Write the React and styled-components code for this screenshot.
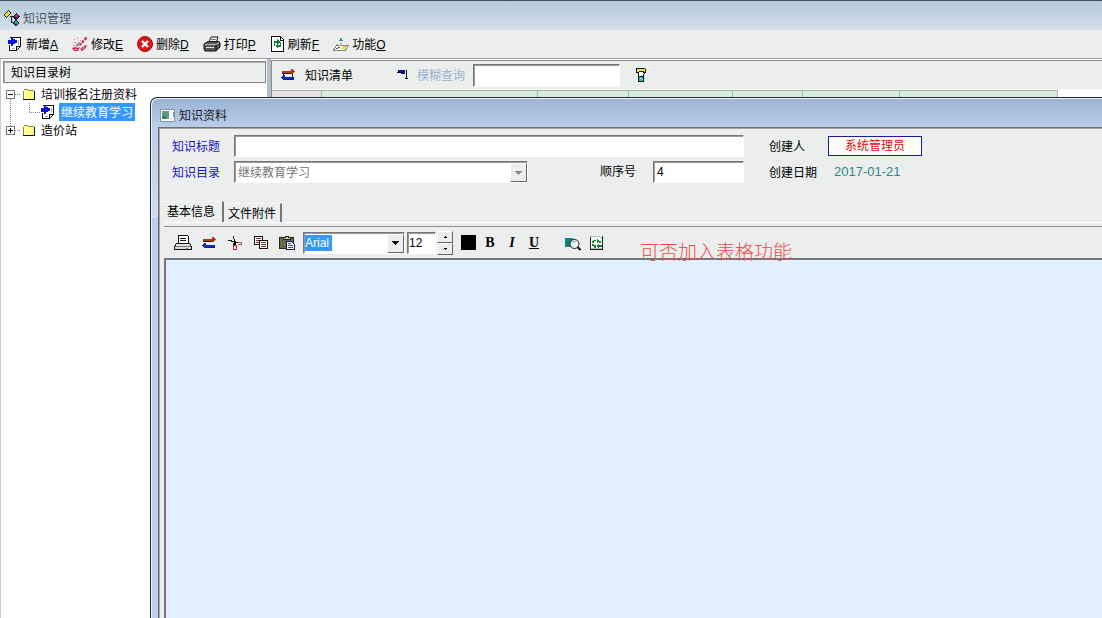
import React, { useState } from 'react'
import styled, { createGlobalStyle, css } from 'styled-components'

const menuItems = [
  { text: '新增', hotkey: 'A', icon: <AddIcon /> },
  { text: '修改', hotkey: 'E', icon: <EditIcon /> },
  { text: '删除', hotkey: 'D', icon: <DeleteIcon /> },
  { text: '打印', hotkey: 'P', icon: <PrinterIcon /> },
  { text: '刷新', hotkey: 'F', icon: <RefreshIcon /> },
  { text: '功能', hotkey: 'O', icon: <FunctionIcon /> },
]

const gridColumns = [49, 216, 91, 104, 70, 97, 158]

export default function App() {
  return (
    <Desktop>
      <GlobalStyle />
      <TitleBar>
        <TreeLogo />
        <h1>知识管理</h1>
      </TitleBar>
      <MenuBar>
        {menuItems.map((item) => (
          <MenuButton key={item.hotkey} type="button">
            {item.icon}
            <span>{item.text}<u>{item.hotkey}</u></span>
          </MenuButton>
        ))}
      </MenuBar>
      <Body>
        <DirectoryTree />
        <ListPanel />
      </Body>
      <KnowledgeDialog />
      <Remark>可否加入表格功能</Remark>
    </Desktop>
  )
}

function DirectoryTree() {
  return (
    <Sidebar>
      <SidebarHeader>知识目录树</SidebarHeader>
      <Tree>
        <TreeRow>
          <Expander type="button" aria-label="收起"><Guide open /></Expander>
          <FolderIcon />
          <TreeLabel type="button">培训报名注册资料</TreeLabel>
        </TreeRow>
        <TreeRow>
          <ChildGuide />
          <AddIcon />
          <TreeLabel type="button" $selected>继续教育学习</TreeLabel>
        </TreeRow>
        <TreeRow>
          <Expander type="button" aria-label="展开"><Guide /></Expander>
          <FolderIcon />
          <TreeLabel type="button">造价站</TreeLabel>
        </TreeRow>
      </Tree>
    </Sidebar>
  )
}

function ListPanel() {
  return (
    <Panel>
      <ListBar>
        <SwapIcon linked />
        <ListTitle>知识清单</ListTitle>
        <FilterIcon />
        <SearchLabel htmlFor="search">模糊查询</SearchLabel>
        <SearchInput id="search" />
        <PlainButton type="button" aria-label="查询"><TorchIcon /></PlainButton>
      </ListBar>
      <Grid>
        <thead>
          <tr>
            {gridColumns.map((w, i) => (
              <GridHead key={i} $w={w} $first={i === 0} />
            ))}
          </tr>
        </thead>
      </Grid>
    </Panel>
  )
}

function KnowledgeDialog() {
  const [tab, setTab] = useState(0)
  const [size, setSize] = useState(12)

  return (
    <Dialog role="dialog" aria-labelledby="dialog-title">
      <DialogTitle>
        <FormIcon />
        <h2 id="dialog-title">知识资料</h2>
      </DialogTitle>
      <Client>
        <Form>
          <Label htmlFor="title" $blue>知识标题</Label>
          <TitleInput id="title" />
          <Label htmlFor="creator">创建人</Label>
          <Creator id="creator">系统管理员</Creator>

          <Label htmlFor="directory" $blue>知识目录</Label>
          <Combo>
            <select id="directory" disabled>
              <option>继续教育学习</option>
            </select>
            <Arrow><Triangle color="#8c8c8c" /></Arrow>
          </Combo>
          <OrderLabel htmlFor="order">顺序号</OrderLabel>
          <OrderInput id="order" defaultValue="4" />
          <Label htmlFor="created">创建日期</Label>
          <Created id="created">2017-01-21</Created>
        </Form>

        <Tabs role="tablist">
          {['基本信息', '文件附件'].map((name, i) => (
            <Tab key={name} type="button" role="tab" aria-selected={tab === i} $active={tab === i} onClick={() => setTab(i)}>
              {name}
            </Tab>
          ))}
        </Tabs>

        <Page>
          <EditBar>
            <ToolButton type="button" aria-label="打印"><PrintOutlineIcon /></ToolButton>
            <ToolButton type="button" aria-label="切换"><SwapIcon /></ToolButton>
            <ToolButton type="button" aria-label="剪切"><CutIcon /></ToolButton>
            <ToolButton type="button" aria-label="复制"><CopyIcon /></ToolButton>
            <ToolButton type="button" aria-label="粘贴"><PasteIcon /></ToolButton>
            <FontCombo>
              <select aria-label="字体">
                <option>Arial</option>
              </select>
              <Arrow><Triangle color="#000" /></Arrow>
            </FontCombo>
            <SizeInput aria-label="字号" value={size} onChange={(e) => setSize(e.target.value)} />
            <Spinner>
              <button type="button" aria-label="增大" onClick={() => setSize(Number(size) + 1)}>
                <svg width="3" height="2"><path d="M1 0h1v1h1v1H0V1h1z" /></svg>
              </button>
              <button type="button" aria-label="减小" onClick={() => setSize(Number(size) - 1)}>
                <svg width="3" height="2"><path d="M0 0h3v1H2v1H1V1H0z" /></svg>
              </button>
            </Spinner>
            <ColorButton type="button" aria-label="颜色" />
            <StyleButton type="button"><b>B</b></StyleButton>
            <StyleButton type="button"><i>I</i></StyleButton>
            <StyleButton type="button"><u>U</u></StyleButton>
            <Gap />
            <ToolButton type="button" aria-label="查找" $narrow><FindIcon /></ToolButton>
            <ToolButton type="button" aria-label="替换" $narrow><ReplaceIcon /></ToolButton>
          </EditBar>
          <Editor aria-label="内容" />
        </Page>
      </Client>
    </Dialog>
  )
}

/* ---------- icons ---------- */

function TreeLogo() {
  return (
    <svg width="17" height="17" viewBox="0 0 17 17" shapeRendering="crispEdges">
      <path d="M7 6.500h3M8.500 6v7M9 12.500h2" stroke="#222" fill="none" />
      <path d="M0 5l5-5 3 3-5 5z" fill="#222" />
      <path d="M1 5l4-4 2 2-4 4z" fill="#f2e418" />
      <path d="M9 7l4-4 4 3-4 4z" fill="#222" />
      <path d="M11 6l2-2 2 2-2 2z" fill="#b0289a" />
      <path d="M9 13l4-4 3 4-3 4z" fill="#222" />
      <path d="M11 12l2-2 2 3-2 2z" fill="#16a39c" />
    </svg>
  )
}

function AddIcon() {
  return (
    <svg width="16" height="16" viewBox="0 0 16 16" shapeRendering="crispEdges">
      <path d="M3 1h11v10h-1v1h-1v1h-1v1h-1v1H2V9h1z" fill="#111" />
      <path d="M3 2h10v8H9v4H3z" fill="#fff" />
      <path d="M10 11h2v1h-1v1h-1z" fill="#fff" />
      <path d="M11.500 4v5M5 12.500h3" stroke="#a5abb5" />
      <path d="M4 1h2v2h2v1h2v3H8v1H6v2H4V8H1V4h3z" fill="#0814d8" />
    </svg>
  )
}

function EditIcon() {
  return (
    <svg width="16" height="16" viewBox="0 0 16 16">
      <path d="M1 2h9l2 9H2z" fill="#f7e9ee" />
      <path d="M2 3.500h1M5 2.500h1M8 4.500h1M2 6.500h2M1 9.500h2" stroke="#c98695" />
      <path d="M4 8l3-2 2 1-2 3-3 1z" fill="#9c96a8" />
      <path d="M14.500 1.500L8 9" stroke="#c51c48" strokeWidth="2" strokeDasharray="3 1" />
      <path d="M0 12l3-1 3 1 2-1-2 4H2zM8 13l4-3 3-1-1 3-4 3z" fill="#d32452" />
      <path d="M2 13.500h3M10 13l3-2" stroke="#f0a8bc" />
    </svg>
  )
}

function DeleteIcon() {
  return (
    <svg width="16" height="16" viewBox="0 0 16 16">
      <circle cx="8" cy="8" r="7.500" fill="#e01616" stroke="#a30c0c" />
      <path d="M5 5l6 6M11 5l-6 6" stroke="#fff" strokeWidth="2.400" />
    </svg>
  )
}

function PrinterIcon() {
  return (
    <svg width="18" height="16" viewBox="0 0 18 16">
      <path d="M6 6l2-5h7l-2 6z" fill="#fff" stroke="#111" />
      <path d="M8 3.500h5M7.500 5.500h5" stroke="#777" />
      <path d="M1 8l4-2.500h11L17 7v4l-4 4H2l-1-2z" fill="#555" stroke="#111" />
      <path d="M2 8.500h11l3-2" stroke="#bbb" fill="none" />
      <path d="M3 11.500h8" stroke="#ddd" />
      <path d="M13 9v5" stroke="#111" />
    </svg>
  )
}

function RefreshIcon() {
  return (
    <svg width="15" height="16" viewBox="0 0 15 16" shapeRendering="crispEdges">
      <path d="M1.500.500h9l3 3v12h-12z" fill="#fff" stroke="#111" />
      <path d="M10.500 1v3h3" fill="none" stroke="#111" />
      <path d="M4 5h3V3l3 3-3 3V7H5v3H4zM11 11H8v2l-3-3 3-3v2h2V6h1z" fill="#18843a" />
    </svg>
  )
}

function FunctionIcon() {
  return (
    <svg width="16" height="16" viewBox="0 0 16 16" shapeRendering="crispEdges">
      <path d="M8 1l2 4H6z" fill="#2795a8" />
      <path d="M3.500 9.500h12l-3 5H.500z" fill="#f6f6f2" stroke="#888" />
      <path d="M7 7h2v1H7zM3 8h2v1H3z" fill="#999" />
      <path d="M7 13l3-3h4l-2 3z" fill="#e9dc23" />
      <path d="M3 12.500h2M5 11.500h2" stroke="#555" />
    </svg>
  )
}

function FolderIcon() {
  return (
    <svg width="14" height="14" viewBox="0 0 14 14" shapeRendering="crispEdges">
      <path d="M1 12V3h1V2h4v1h1v1h5v1h1v7z" fill="#ffff80" />
      <path d="M1.500 3.500v8M2 2.500h4M6 3.500h6" stroke="#8a8a4a" />
      <path d="M1 12.500h12M12.500 4v8" stroke="#111" />
      <path d="M2.500 11V5" stroke="#fff" />
    </svg>
  )
}

function Guide({ open }) {
  return (
    <svg width="22" height="18" viewBox="0 0 22 18" shapeRendering="crispEdges">
      <path d={open ? 'M10.500 14v4M15 9.500h6' : 'M10.500 0v5M15 9.500h6'} stroke="#888" strokeDasharray="1 1" />
      <rect x="6.500" y="5.500" width="8" height="8" fill="#fff" stroke="#777" />
      <path d={open ? 'M8 9.500h5' : 'M8 9.500h5M10.500 7v5'} stroke="#000" />
    </svg>
  )
}

function ChildGuide() {
  return (
    <svg width="40" height="18" viewBox="0 0 40 18" shapeRendering="crispEdges">
      <path d="M10.500 0v18M29.500 0v9M29 9.500h11" stroke="#888" strokeDasharray="1 1" />
    </svg>
  )
}

function SwapIcon({ linked }) {
  return (
    <svg width="16" height="12" viewBox="0 0 16 12" shapeRendering="crispEdges">
      <path d="M2 2h9V0h2v1h1v1h1v1h-1v1h-1v1h-2V4H2z" fill="#b8301c" />
      <path d="M14 10H5v1H3v-1H2V9H1V8h1V7h1V6h2v2h9z" fill="#0c28c4" />
      <path d="M2 4h9v1H2zM5 10h9v1H5z" fill="#222" />
      {linked && <path d="M3 4h1v3H3zM12 5h1v3h-1z" fill="#222" />}
    </svg>
  )
}

function FilterIcon() {
  return (
    <svg width="13" height="12" viewBox="0 0 13 12" shapeRendering="crispEdges">
      <path d="M2 1h7v4H5V4H2z" fill="#0b0f8c" />
      <path d="M1 3h4v1H1zM10 1h1v8h1v1H9V9h1z" fill="#111" />
    </svg>
  )
}

function TorchIcon() {
  return (
    <svg width="12" height="14" viewBox="0 0 12 14" shapeRendering="crispEdges">
      <path d="M1 0h9v1h1v4h-1v1H9v8H3V5H1z" fill="#111" />
      <path d="M2 1h8v3H9V3H4v1H2z" fill="#f6ea1c" />
      <path d="M4 4h4v1h1v1H8v2H4z" fill="#fff" />
      <path d="M4 9h4v4H4z" fill="#29bcd0" />
      <path d="M5 10h1v1H5zM7 11h1v1H7z" fill="#fff" />
    </svg>
  )
}

function FormIcon() {
  return (
    <svg width="16" height="13" viewBox="0 0 16 13" shapeRendering="crispEdges">
      <rect x=".500" y=".500" width="14" height="12" fill="#fff" stroke="#8796a5" />
      <path d="M2 2h7v8H2z" fill="#5c9a8a" />
      <path d="M2 7h4v3H2z" fill="#3f7a6e" />
      <path d="M11 9h1v1h-1zM13 3h1v5h-1z" fill="#7c929e" />
    </svg>
  )
}

function PrintOutlineIcon() {
  return (
    <svg width="18" height="16" viewBox="0 0 18 16" shapeRendering="crispEdges">
      <path d="M4.500 8.500v-8h9l1 1v7" fill="#fff" stroke="#111" />
      <path d="M6 3.500h6M6 5.500h6" stroke="#111" />
      <path d="M2.500 8.500h13l2 3v3H.500v-3z" fill="#dcdcdc" stroke="#111" />
      <path d="M1 11.500h16" stroke="#777" />
      <path d="M12 13h2v1h-2z" fill="#888" />
    </svg>
  )
}

function CutIcon() {
  return (
    <svg width="16" height="16" viewBox="0 0 16 16" shapeRendering="crispEdges">
      <path d="M6 1h1v3h1v2h1v1h2v1H7V7H4V6H1V5h4v1h2V4H6z" fill="#111" />
      <path d="M6 8h3v2H6z" fill="#111" />
      <path d="M10.500 7.500h4v2h-4" stroke="#9a5b5b" fill="none" />
      <path d="M6.500 10.500h3v4h-3z" fill="#fff" stroke="#d2182c" />
    </svg>
  )
}

function CopyIcon() {
  return (
    <svg width="16" height="16" viewBox="0 0 16 16" shapeRendering="crispEdges">
      <path d="M1.500 1.500h8v8h-8z" fill="#fff" stroke="#111" />
      <path d="M3 3.500h5M3 5.500h3M3 7.500h3" stroke="#7d2d2d" />
      <path d="M6.500 5.500h8v8h-8z" fill="#fff" stroke="#111" />
      <path d="M8 7.500h5M8 9.500h5M8 11.500h5" stroke="#7d2d2d" />
    </svg>
  )
}

function PasteIcon() {
  return (
    <svg width="16" height="16" viewBox="0 0 16 16" shapeRendering="crispEdges">
      <path d="M.500 2.500h14v11H.500z" fill="#6b6b42" stroke="#222" />
      <path d="M4 4V2h2V1h3v1h2v2z" fill="#d9d56c" stroke="#222" />
      <path d="M7.500 6.500h5l3 3v5h-8z" fill="#fff" stroke="#10106a" />
      <path d="M9 8.500h3M9 10.500h5M9 12.500h5" stroke="#3a4aa0" />
    </svg>
  )
}

function FindIcon() {
  return (
    <svg width="16" height="16" viewBox="0 0 16 16">
      <path d="M0 3h7l4 2v7H0z" fill="#12827f" />
      <circle cx="9.500" cy="9" r="4.500" fill="#edf3f3" stroke="#222" />
      <path d="M12.500 12l3 3" stroke="#111" strokeWidth="2" />
      <path d="M7 8q2-3 4-1" fill="none" stroke="#8aa" />
    </svg>
  )
}

function ReplaceIcon() {
  return (
    <svg width="14" height="16" viewBox="0 0 14 16" shapeRendering="crispEdges">
      <path d="M.500 1.500h9l3 3v9H.500z" fill="#fbfdfb" stroke="#b4bab4" />
      <path d="M.500 2v12.500h12V1" fill="none" stroke="#222" />
      <path d="M3 5h3v1H4v2H2V6h1zM7 4l3 2h1v2H9V7L7 8zM2 9h2v1h2v3H4v-2H2zM8 9h1v1h3v2H9v1H8l-1-2z" fill="#168229" />
    </svg>
  )
}

function Triangle({ color }) {
  return (
    <svg width="7" height="4" viewBox="0 0 7 4" shapeRendering="crispEdges">
      <path d="M0 0h7v1H6v1H5v1H4v1H3V3H2V2H1V1H0z" fill={color} />
    </svg>
  )
}

/* ---------- styles ---------- */

const GlobalStyle = createGlobalStyle`
  * { box-sizing: border-box; }
  body {
    margin: 0;
    overflow: hidden;
    font: 12px/16px 'Liberation Sans', 'Noto Sans CJK SC', sans-serif;
    color: #000;
  }
  h1, h2 { margin: 0; font-size: 12px; font-weight: normal; }
  button, input, select, textarea {
    margin: 0;
    padding: 0;
    border: 0;
    border-radius: 0;
    outline: 0;
    font: inherit;
    color: inherit;
    background: none;
  }
  svg { display: block; flex: none; }
`

const sunken = css`
  background: #fff;
  border: 1px solid;
  border-color: #777 #fff #fff #777;
  box-shadow: inset 1px 1px 0 #999;
`

const raised = css`
  background: #eceeed;
  border: 1px solid;
  border-color: #fff #666 #666 #fff;
`

const Desktop = styled.div`
  position: relative;
  display: flex;
  flex-direction: column;
  height: 100vh;
  overflow: hidden;
  background: #fff;
`

const TitleBar = styled.header`
  display: flex;
  align-items: center;
  gap: 3px;
  height: 30px;
  padding: 6px 3px 0;
  border-top: 1px solid #4a4f5a;
  background: linear-gradient(#b5c9dc, #d3e0ec);
  color: #4d5863;
`

const MenuBar = styled.nav`
  display: flex;
  align-items: center;
  gap: 14px;
  height: 29px;
  padding-left: 7px;
  border-bottom: 1px solid #9b9b9b;
  background: #eceeed;
`

const MenuButton = styled.button`
  display: flex;
  align-items: center;
  gap: 3px;
  white-space: nowrap;

  span { padding-top: 2px; }
`

const Body = styled.main`
  display: flex;
  flex: 1;
  min-height: 0;
`

const Sidebar = styled.aside`
  flex: none;
  width: 271px;
  border-right: 4px solid #b3bdcb;
  border-left: 1px solid #c4ccd4;
`

const SidebarHeader = styled.div`
  height: 22px;
  margin: 2px 1px 0 2px;
  padding: 3px 7px;
  border: 1px solid #858585;
  box-shadow: inset 1px 1px 0 #b4b4b4;
  background: #eceeed;
`

const Tree = styled.ul`
  margin: 2px 0 0 -1px;
  padding: 0;
  list-style: none;
`

const TreeRow = styled.li`
  display: flex;
  align-items: center;
  height: 18px;
`

const Expander = styled.button`
  height: 18px;
`

const TreeLabel = styled.button`
  height: 18px;
  margin-left: 3px;
  padding: 1px 2px 0;
  white-space: nowrap;
  ${(p) => p.$selected && css`
    color: #fff;
    background: #3399ff;
  `}
`

const Panel = styled.section`
  flex: 1;
  min-width: 0;
  margin-top: 1px;
  border-top: 1px solid #8d8d8d;
  border-left: 1px solid #8d8d8d;
`

const ListBar = styled.div`
  display: flex;
  align-items: center;
  height: 29px;
  padding-left: 8px;
  border-bottom: 1px solid #fff;
  background: #eceeed;
`

const ListTitle = styled.span`
  margin: 0 43px 0 9px;
  padding-top: 2px;
`

const SearchLabel = styled.label`
  margin: 0 8px;
  padding-top: 2px;
  color: #9db3cc;
`

const SearchInput = styled.input`
  width: 147px;
  height: 23px;
  margin-right: 15px;
  padding: 0 3px;
  ${sunken}
`

const PlainButton = styled.button`
  display: flex;
`

const Grid = styled.table`
  table-layout: fixed;
  width: 785px;
  border-collapse: collapse;
`

const GridHead = styled.th`
  width: ${(p) => p.$w}px;
  height: 20px;
  padding: 0;
  border: 1px solid #9fb8ab;
  border-left: 0;
  background: ${(p) => (p.$first ? '#eddfe3' : '#d9ebe1')};
`

const Dialog = styled.section`
  position: absolute;
  top: 97px;
  right: 0;
  bottom: 0;
  left: 150px;
  display: flex;
  flex-direction: column;
  padding-left: 7px;
  border: solid #1f2833;
  border-width: 1px 0 0 1px;
  border-top-left-radius: 7px;
  box-shadow: inset 1px 1px 0 #eef4fb;
  background: linear-gradient(#9ab4d3, #b9cee7 29px, #d0deee 120px, #bbd0ea 120px);
`

const DialogTitle = styled.header`
  display: flex;
  flex: none;
  align-items: center;
  gap: 3px;
  height: 29px;
  padding: 6px 0 0 2px;
  color: #16202c;
`

const Client = styled.div`
  display: flex;
  flex: 1;
  flex-direction: column;
  min-height: 0;
  padding: 7px 0 0 1px;
  border: solid #6c7178;
  border-width: 1px 0 0 1px;
  box-shadow: inset 1px 1px 0 #a4a4a4;
  background: #eceeed;
`

const Form = styled.form`
  display: grid;
  grid-template-columns: 62px 294px 125px 91px 84px 94px;
  row-gap: 4px;
  align-items: center;
  padding-left: 12px;
  white-space: nowrap;
`

const Label = styled.label`
  padding-top: 2px;
  padding-left: ${(p) => (p.$blue ? 0 : 25)}px;
  color: ${(p) => (p.$blue ? '#1414c4' : '#000')};
`

const OrderLabel = styled(Label)`
  padding-top: 0;
  padding-left: 72px;
`

const TextInput = styled.input`
  width: 100%;
  height: 22px;
  padding: 0 3px;
  ${sunken}
`

const TitleInput = styled(TextInput)`
  grid-column: 2 / 5;
`

const OrderInput = styled(TextInput)`
  align-self: start;
`

const Creator = styled.output`
  height: 20px;
  border: 1px solid #1a1a9c;
  background: #fffdf8;
  color: #dc0a0a;
  line-height: 18px;
  text-align: center;
`

const Created = styled.output`
  padding-left: 6px;
  color: #2c8886;
  font-size: 13px;
`

const Combo = styled.div`
  position: relative;
  height: 22px;
  ${sunken}

  select {
    width: 100%;
    height: 20px;
    padding: 1px 20px 0 3px;
    appearance: none;
    opacity: 1;
    color: #000;
  }
  select:disabled { color: #757575; }
`

const FontCombo = styled(Combo)`
  width: 102px;
  margin: 0 2px 0 3px;

  select {
    padding: 0 20px 0 1px;
    color: #fff;
    background: linear-gradient(#3399ff, #3399ff) 1px 2px / 27px 16px no-repeat;
  }
`

const Arrow = styled.span`
  position: absolute;
  top: 1px;
  right: 0;
  bottom: 0;
  display: flex;
  align-items: center;
  justify-content: center;
  width: 17px;
  pointer-events: none;
  ${raised}
`

const Tabs = styled.div`
  display: flex;
  align-items: flex-end;
  height: 21px;
  margin-top: 18px;
`

const Tab = styled.button`
  height: ${(p) => (p.$active ? 21 : 19)}px;
  padding: ${(p) => (p.$active ? '0 7px 0 7px' : '2px 4px 0 4px')};
  border-right: 2px solid #777;
  border-top: 1px solid #f8f8f8;
`

const Page = styled.div`
  display: flex;
  flex: 1;
  flex-direction: column;
  min-height: 0;
  margin-left: 4px;
  padding-top: 3px;
  border-top: 1px solid #fff;
`

const EditBar = styled.div`
  display: flex;
  flex: none;
  align-items: center;
  height: 32px;
  padding-left: 6px;
  border-top: 1px solid #8f8f8f;
`

const ToolButton = styled.button`
  display: flex;
  align-items: center;
  justify-content: center;
  width: ${(p) => (p.$narrow ? 24 : 26)}px;
  height: 26px;
`

const SizeInput = styled.input`
  width: 29px;
  height: 22px;
  padding: 0 1px;
  ${sunken}
`

const Spinner = styled.div`
  display: flex;
  flex-direction: column;
  width: 16px;
  margin: 0 8px 0 1px;

  button {
    display: flex;
    align-items: center;
    justify-content: center;
    height: 12px;
    ${raised}
  }
`

const ColorButton = styled.button`
  width: 15px;
  height: 15px;
  margin-right: 3px;
  background: #000;
`

const StyleButton = styled.button`
  width: 22px;
  font-family: 'Liberation Serif', serif;
  font-size: 14px;
  font-weight: bold;
`

const Gap = styled.span`
  width: 16px;
`

const Editor = styled.textarea`
  flex: 1;
  width: 100%;
  padding: 4px;
  border: solid #70767c;
  border-width: 2px 0 0 2px;
  background: #e0f0ff;
  resize: none;
`

const Remark = styled.div`
  position: absolute;
  top: 241px;
  left: 640px;
  color: #f04a4a;
  font-size: 19px;
  font-weight: 300;
  line-height: 24px;
  white-space: nowrap;
`
